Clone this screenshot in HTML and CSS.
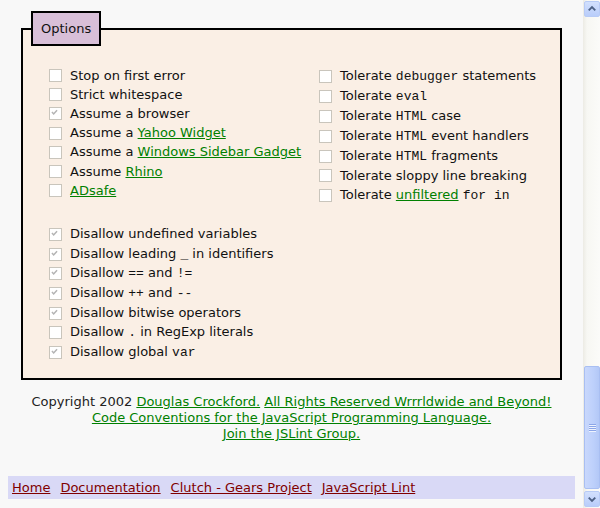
FILE: index.html
```html
<!DOCTYPE html>
<html>
<head>
<meta charset="utf-8">
<title>JSLint Options</title>
<link rel="stylesheet" href="styles.css">
</head>
<body>
<div class="window">
  <div class="page">
    <fieldset class="options">
      <legend>Options</legend>
      <div class="group-top">
        <div class="col col-left">
          <div class="opt"><span class="cb"></span><span>Stop on first error</span></div>
          <div class="opt"><span class="cb"></span><span>Strict whitespace</span></div>
          <div class="opt"><span class="cb checked"><svg viewBox="0 0 13 13"><polyline points="3.5,6 5.5,8.2 9.5,3.8"/></svg></span><span>Assume a browser</span></div>
          <div class="opt"><span class="cb"></span><span>Assume a <a href="#">Yahoo Widget</a></span></div>
          <div class="opt"><span class="cb"></span><span>Assume a <a href="#">Windows Sidebar Gadget</a></span></div>
          <div class="opt"><span class="cb"></span><span>Assume <a href="#">Rhino</a></span></div>
          <div class="opt"><span class="cb"></span><span><a href="#">ADsafe</a></span></div>
        </div>
        <div class="col col-right">
          <div class="opt"><span class="cb"></span><span>Tolerate <code>debugger</code> statements</span></div>
          <div class="opt"><span class="cb"></span><span>Tolerate <code>eval</code></span></div>
          <div class="opt"><span class="cb"></span><span>Tolerate <code>HTML</code> case</span></div>
          <div class="opt"><span class="cb"></span><span>Tolerate <code>HTML</code> event handlers</span></div>
          <div class="opt"><span class="cb"></span><span>Tolerate <code>HTML</code> fragments</span></div>
          <div class="opt"><span class="cb"></span><span>Tolerate sloppy line breaking</span></div>
          <div class="opt"><span class="cb"></span><span>Tolerate <a href="#">unfiltered</a> <code>for in</code></span></div>
        </div>
      </div>
      <div class="col col-bottom">
        <div class="opt"><span class="cb checked"><svg viewBox="0 0 13 13"><polyline points="3.5,6 5.5,8.2 9.5,3.8"/></svg></span><span>Disallow undefined variables</span></div>
        <div class="opt"><span class="cb checked"><svg viewBox="0 0 13 13"><polyline points="3.5,6 5.5,8.2 9.5,3.8"/></svg></span><span>Disallow leading <code>_</code> in identifiers</span></div>
        <div class="opt"><span class="cb checked"><svg viewBox="0 0 13 13"><polyline points="3.5,6 5.5,8.2 9.5,3.8"/></svg></span><span>Disallow <code>==</code> and <code>!=</code></span></div>
        <div class="opt"><span class="cb checked"><svg viewBox="0 0 13 13"><polyline points="3.5,6 5.5,8.2 9.5,3.8"/></svg></span><span>Disallow <code>++</code> and <code>--</code></span></div>
        <div class="opt"><span class="cb checked"><svg viewBox="0 0 13 13"><polyline points="3.5,6 5.5,8.2 9.5,3.8"/></svg></span><span>Disallow bitwise operators</span></div>
        <div class="opt"><span class="cb"></span><span>Disallow <code>.</code> in RegExp literals</span></div>
        <div class="opt"><span class="cb checked"><svg viewBox="0 0 13 13"><polyline points="3.5,6 5.5,8.2 9.5,3.8"/></svg></span><span>Disallow global <code>var</code></span></div>
      </div>
    </fieldset>

    <div class="copyright">
      Copyright 2002 <a href="#">Douglas Crockford.</a> <a href="#">All Rights Reserved Wrrrldwide and Beyond!</a><br>
      <a href="#">Code Conventions for the JavaScript Programming Language.</a><br>
      <a href="#">Join the JSLint Group.</a>
    </div>

    <div class="nav">
      <a href="#">Home</a>
      <a href="#">Documentation</a>
      <a href="#">Clutch - Gears Project</a>
      <a href="#">JavaScript Lint</a>
    </div>
  </div>

  <div class="scrollbar">
    <div class="sb-btn"><svg viewBox="0 0 15 15"><polyline points="4,9 7.5,5.5 11,9"/></svg></div>
    <div class="sb-track">
      <div class="sb-thumb"><span class="grip"></span><span class="grip"></span><span class="grip"></span><span class="grip"></span></div>
    </div>
    <div class="sb-btn"><svg viewBox="0 0 15 15"><polyline points="4,6 7.5,9.5 11,6"/></svg></div>
  </div>
</div>
</body>
</html>
```

FILE: styles.css
```css
html, body {
  margin: 0;
  padding: 0;
}

body {
  font-family: "DejaVu Sans", Verdana, sans-serif;
  font-size: 13px;
  color: #111;
}

.window {
  display: flex;
  width: 600px;
  height: 508px;
  overflow: hidden;
}

.page {
  flex: 1;
  background: #f8f8f8;
  padding: 11px 8px 0 8px;
  display: flex;
  flex-direction: column;
}

a {
  color: #008000;
  text-decoration: underline;
}

code {
  font-family: "Liberation Mono", "Courier New", monospace;
  font-size: 13px;
}

.options {
  margin: 0 13px;
  padding: 20px 8px 16px 8px;
  border: 2px solid #000;
  background: #faefe5;
  min-width: 0;
}

.options legend {
  background: #d8bfd8;
  border: 2px solid #000;
  padding: 7px 8px 7px 8px;
  line-height: 17px;
  margin-left: 0;
}

.group-top {
  display: grid;
  grid-template-columns: 270px 1fr;
  padding-left: 18px;
}

.col-right {
  padding-top: 1px;
}

.col-bottom {
  padding-left: 18px;
  margin-top: 19px;
}

.opt {
  display: flex;
  align-items: center;
  white-space: nowrap;
  line-height: 16px;
}

.col-left .opt { height: 19.2px; }
.col-right .opt { height: 19.8px; }
.col-bottom .opt { height: 19.67px; }

.cb {
  flex: none;
  width: 11px;
  height: 11px;
  border: 1px solid #c9c5bc;
  background: #fff;
  margin-right: 8px;
  display: flex;
}

.cb svg {
  width: 11px;
  height: 11px;
  margin: -1px;
  overflow: visible;
}

.cb polyline {
  fill: none;
  stroke: #b4b4b4;
  stroke-width: 1.8;
}

.copyright {
  margin-top: 14px;
  text-align: center;
  line-height: 16px;
  color: #222;
}

.nav {
  margin-top: 34px;
  background: #d9d9f6;
  padding: 4px 4px 3px 4px;
  line-height: 16px;
  display: flex;
  gap: 10px;
}

.nav a {
  color: #800000;
}

/* XP style scrollbar */
.scrollbar {
  width: 17px;
  flex: none;
  display: flex;
  flex-direction: column;
  background: linear-gradient(to right, #ecebe4, #f7f7f3 4px, #fbfbf9);
}

.sb-btn {
  margin: 1px;
  border: 1px solid #b8cbf6;
  border-radius: 2px;
  background: linear-gradient(to bottom, #d2e0fd, #b9cdfa);
  box-sizing: border-box;
  height: 16px;
  width: 16px;
  display: flex;
  align-items: center;
  justify-content: center;
}

.sb-btn svg {
  width: 14px;
  height: 14px;
}

.sb-btn polyline {
  fill: none;
  stroke: #4d6185;
  stroke-width: 2;
}

.sb-track {
  flex: 1;
  display: flex;
  flex-direction: column;
  justify-content: flex-end;
  padding-bottom: 1px;
}

.sb-thumb {
  height: 123px;
  width: 16px;
  box-sizing: border-box;
  margin-left: 1px;
  border: 1px solid #a9bff2;
  border-radius: 2px;
  background: linear-gradient(to right, #c9d8fc, #bdd0fb 60%, #b3c8f7);
  display: flex;
  flex-direction: column;
  align-items: center;
  justify-content: center;
  gap: 1px;
}

.grip {
  width: 7px;
  height: 1px;
  background: #8ca6e8;
  box-shadow: 0 1px 0 #eef3fe;
}
```
